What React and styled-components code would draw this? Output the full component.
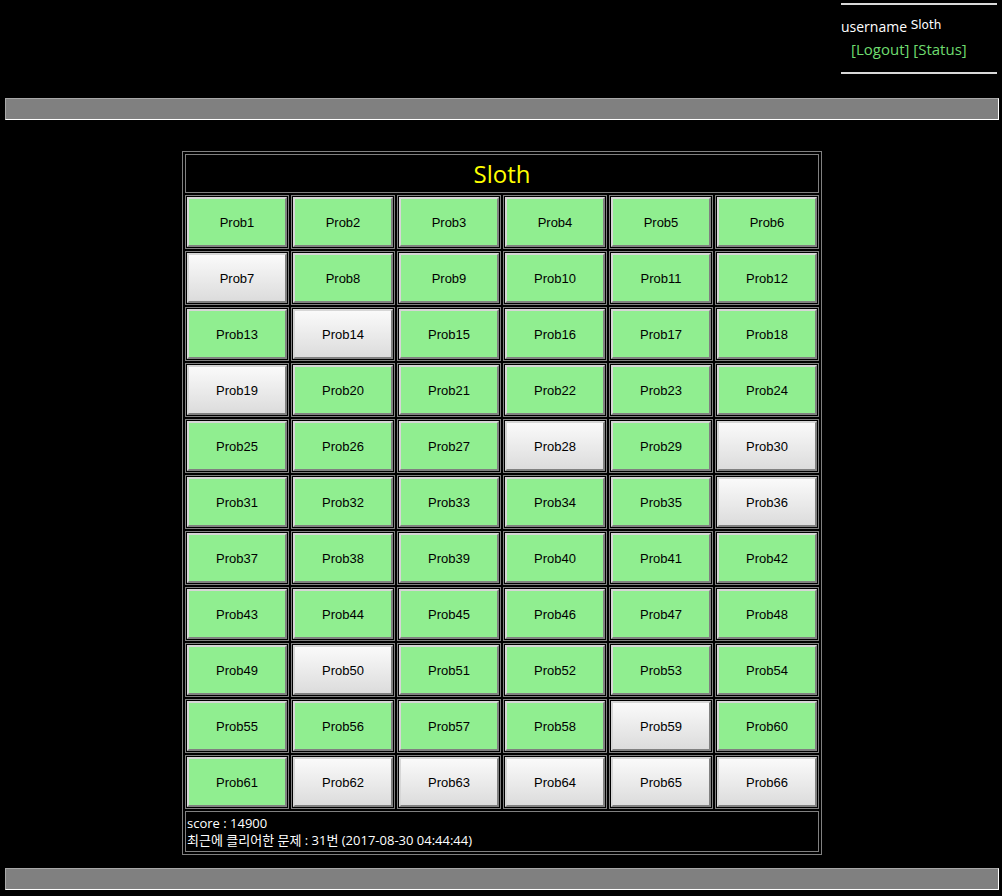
import React from 'react'
import styled, { createGlobalStyle } from 'styled-components';

const GlobalStyle = createGlobalStyle`
  html, body {
    margin: 0;
    padding: 0;
    background-color: #000;
  }
  body {
    font-family: "Comic Sans MS", "Open Sans", "Noto Sans CJK KR", sans-serif;
    color: white;
  }
`;

const unsolved = [7, 14, 19, 28, 30, 36, 50, 59, 62, 63, 64, 65, 66];

const App = () => {
  const rows = [];
  for (let r = 0; r < 11; r++) {
    const cells = [];
    for (let c = 1; c <= 6; c++) cells.push(r * 6 + c);
    rows.push(cells);
  }

  return (
    <Page>
      <GlobalStyle />
      <Header>
        <UserBox>
          <UserLine>
            username <UserName>Sloth</UserName>
          </UserLine>
          <LinkLine>
            <MenuLink href="#">[Logout]</MenuLink> <MenuLink href="#">[Status]</MenuLink>
          </LinkLine>
        </UserBox>
      </Header>
      <Bar />
      <Board>
        <tbody>
          <tr>
            <TitleCell colSpan={6}>Sloth</TitleCell>
          </tr>
          {rows.map((row, i) => (
            <tr key={i}>
              {row.map((n) => (
                <Cell key={n}>
                  <ProbBtn solved={!unsolved.includes(n)}>Prob{n}</ProbBtn>
                </Cell>
              ))}
            </tr>
          ))}
          <tr>
            <InfoCell colSpan={6}>
              score : 14900<br />
              최근에 클리어한 문제 : 31번 (2017-08-30 04:44:44)
            </InfoCell>
          </tr>
        </tbody>
      </Board>
      <Bar bottom />
    </Page>
  )
}

const Page = styled.div`
  padding: 0 3px 0 5px;
`;

const Header = styled.div`
  display: flex;
  justify-content: flex-end;
  padding-top: 3px;
`;

const UserBox = styled.div`
  width: 156px;
  margin-right: 2px;
  border-top: 2px solid #d8d8d8;
  border-bottom: 2px solid #d8d8d8;
  height: 71px;
  box-sizing: border-box;
  padding-top: 10px;
`;

const UserLine = styled.div`
  font-size: 14px;
  line-height: 20px;
  color: white;
`;

const UserName = styled.span`
  font-family: Tahoma, "DejaVu Sans", sans-serif;
  font-size: 12px;
  vertical-align: 3px;
`;

const LinkLine = styled.div`
  margin-top: 2px;
  padding-left: 10px;
  font-size: 15px;
  line-height: 20px;
`;

const MenuLink = styled.a`
  color: #6fdc6f;
  text-decoration: none;
`;

const Bar = styled.div`
  height: 20px;
  background-color: #808080;
  border: 1px solid;
  border-color: #a8a8a8 #fff #fff #a8a8a8;
  margin-top: ${(p) => (p.bottom ? '13px' : '24px')};
`;

const Board = styled.table`
  margin: 31px auto 0;
  width: 640px;
  border: 1px solid #808080;
  border-spacing: 2px;
  border-collapse: separate;
`;

const TitleCell = styled.td`
  border: 1px solid #808080;
  height: 37px;
  padding: 0;
  text-align: center;
  color: #ffff00;
  font-size: 24px;
  line-height: 37px;
`;

const Cell = styled.td`
  border: 1px solid #808080;
  padding: 1px;
  width: 102px;
`;

const ProbBtn = styled.button`
  display: block;
  width: 100px;
  height: 50px;
  margin: 0;
  padding: 0;
  font-family: Arial, "Liberation Sans", sans-serif;
  font-size: 13px;
  color: #000;
  border: 2px solid;
  border-color: #d6d6d6 #808080 #808080 #d6d6d6;
  background: ${(p) => (p.solved ? '#90ee90' : 'linear-gradient(#fafafa, #dcdcdc)')};
  cursor: pointer;
`;

const InfoCell = styled.td`
  border: 1px solid #808080;
  padding: 3px 1px 2px;
  font-size: 13px;
  line-height: 17px;
  color: white;
  text-align: left;
`;

export default App
